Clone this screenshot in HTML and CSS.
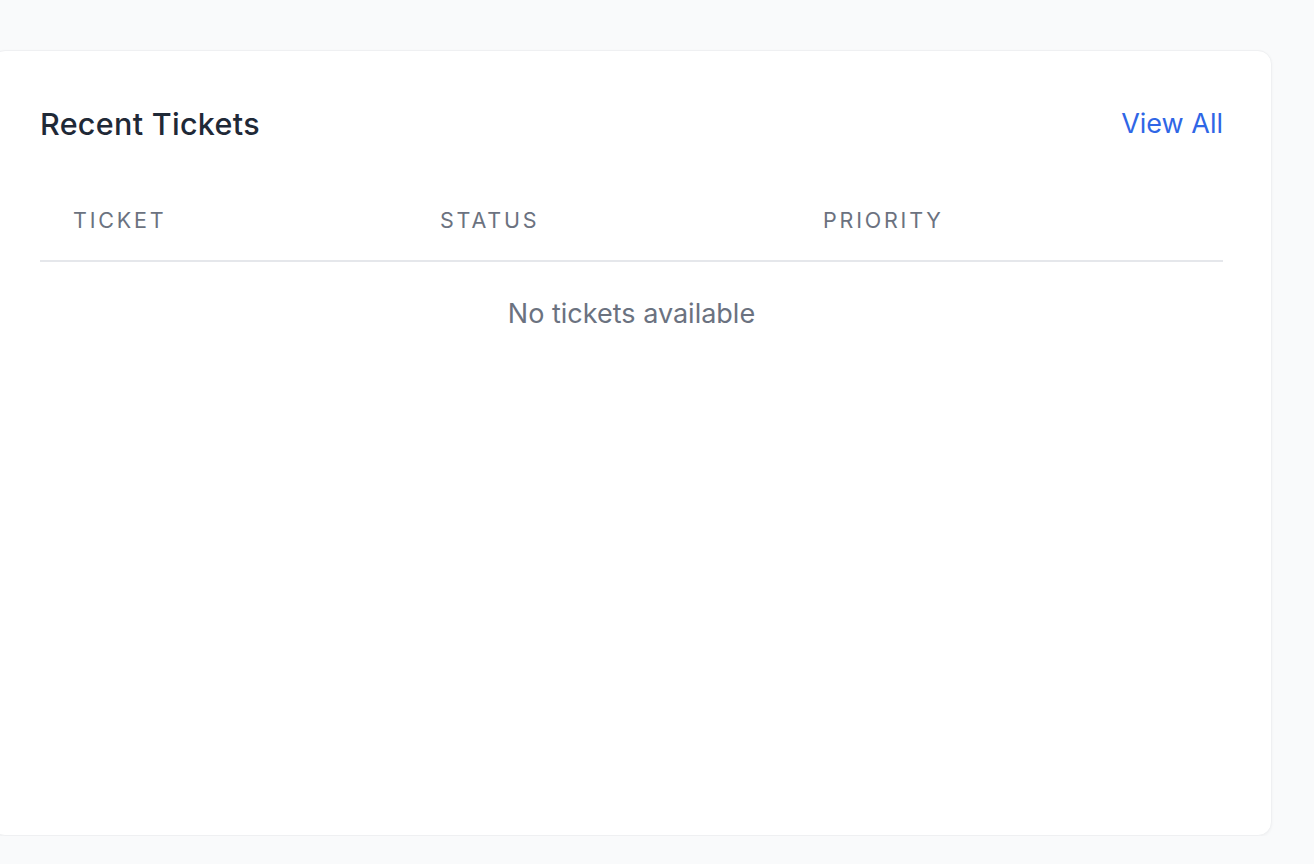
FILE: index.html
```html
<!DOCTYPE html>
<html lang="en">
<head>
<meta charset="utf-8">
<title>Recent Tickets</title>
<link rel="stylesheet" href="styles.css">
</head>
<body>
<main class="page">
  <section class="card">
    <header class="card-header">
      <h2 class="card-title">Recent Tickets</h2>
      <a class="view-all" href="#">View All</a>
    </header>
    <table class="tickets">
      <colgroup>
        <col class="col-ticket">
        <col class="col-status">
        <col class="col-priority">
      </colgroup>
      <thead>
        <tr>
          <th>Ticket</th>
          <th>Status</th>
          <th>Priority</th>
        </tr>
      </thead>
      <tbody>
        <tr>
          <td class="empty" colspan="3">No tickets available</td>
        </tr>
      </tbody>
    </table>
  </section>
</main>
</body>
</html>
```

FILE: styles.css
```css
* { box-sizing: border-box; }
html, body {
  margin: 0;
  padding: 0;
  background: #f9fafb;
  font-family: Inter, "Noto Sans", "Liberation Sans", sans-serif;
  overflow: hidden;
}
.page {
  padding-top: 50px;
  margin-left: -9px;
  width: 1281px;
}
.card {
  background: #ffffff;
  border: 1px solid #eff0f2;
  border-radius: 14px;
  box-shadow: 0 1px 3px rgba(0,0,0,0.04);
  height: 786px;
  padding: 55px 48px 48px 48px;
}
.card-header {
  display: flex;
  justify-content: space-between;
  align-items: center;
  height: 36px;
}
.card-title {
  margin: 0;
  font-size: 30.5px;
  font-weight: 450;
  letter-spacing: 0.3px;
  color: #1f2937;
  line-height: 36px;
}
.view-all {
  font-size: 27px;
  color: #2f66e6;
  text-decoration: none;
  line-height: 36px;
}
.tickets {
  width: 100%;
  border-collapse: collapse;
  margin-top: 41px;
  table-layout: fixed;
}
.col-ticket { width: 367px; }
.col-status { width: 383px; }
.tickets th {
  text-align: left;
  font-weight: 400;
  font-size: 21.5px;
  letter-spacing: 0.13em;
  text-transform: uppercase;
  color: #6b7280;
  padding: 0 33px 4px 33px;
  height: 78px;
  border-bottom: 2px solid #e5e7eb;
}
.tickets td.empty {
  text-align: center;
  color: #6b7280;
  font-size: 27px;
  padding: 35px 0;
}
```
